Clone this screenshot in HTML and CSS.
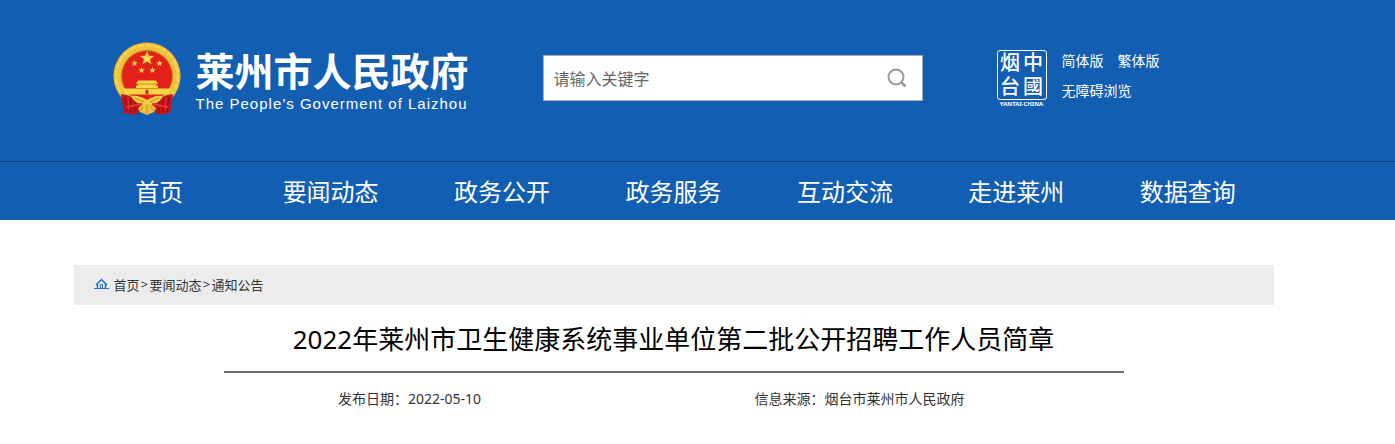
FILE: index.html
```html
<!DOCTYPE html>
<html lang="zh-CN">
<head>
    <meta charset="UTF-8">
    <meta name="viewport" content="width=device-width, initial-scale=1.0">
    <title>2022年莱州市卫生健康系统事业单位第二批公开招聘工作人员简章</title>
    <link rel="stylesheet" href="styles.css">
</head>
<body>
    <header class="header">
        <div class="wrap header-top">
            <a href="#" class="brand">
                <svg class="emblem" viewBox="0 0 68 73" aria-hidden="true">
                    <circle cx="34" cy="34" r="33.5" fill="#e9b936"/>
                    <circle cx="34" cy="34" r="31" fill="none" stroke="#f5d24e" stroke-width="3" stroke-dasharray="7 1"/>
                    <circle cx="34" cy="34" r="28" fill="none" stroke="#f0c743" stroke-width="2" stroke-dasharray="3 1"/>
                    <circle cx="34" cy="34" r="33" fill="none" stroke="#d9a12a" stroke-width="1" stroke-dasharray="3 3"/>
                    <circle cx="34" cy="34" r="25.500" fill="#e3211b" stroke="#c98a1c" stroke-width="1"/>
                    <g fill="#f8d648">
                        <path d="M34 9l2 4.700 5 .3-4 3.300 1.400 4.900-4.400-2.800-4.400 2.800 1.400-4.900-4-3.300 5-.3z"/>
                        <path d="M21.500 18l.9 2.200 2.300.1-1.800 1.500.6 2.200-2-1.200-2 1.200.6-2.200-1.800-1.500 2.300-.1z"/>
                        <path d="M46.500 18l.9 2.200 2.300.1-1.800 1.500.6 2.200-2-1.200-2 1.200.6-2.200-1.800-1.500 2.300-.1z"/>
                        <path d="M28.500 25l.9 2.200 2.300.1-1.800 1.500.6 2.200-2-1.200-2 1.200.6-2.200-1.800-1.500 2.300-.1z"/>
                        <path d="M39.500 25l.9 2.200 2.300.1-1.800 1.500.6 2.200-2-1.200-2 1.200.6-2.200-1.800-1.500 2.300-.1z"/>
                        <path d="M25 38.500h18l2 3.500h-2v1.500h2v3h13l-2 6H12l-2-6h13v-3h2V42h-2z"/>
                    </g>
                    <path d="M24 42h20M23 46.500h22" stroke="#d78b1c" stroke-width="1" fill="none"/>
                    <path d="M32.500 52v-3a1.500 1.500 0 0 1 3 0v3z" fill="#c9281a"/>
                    <path d="M8 52c8 1 14 4 21 8v7c-3 1-4 2-5 6l-3-1-3 1-3-2-4 1z" fill="#c4151a"/>
                    <path d="M60 52c-8 1-14 4-21 8v7c3 1 4 2 5 6l3-1 3 1 3-2 4 1z" fill="#c4151a"/>
                    <path d="M12 55l2 15M17 57l1 13M22 60v11M51 57l-1 13M56 55l-2 15M46 60v11" stroke="#8e1016" stroke-width="1" fill="none"/>
                    <path d="M15 55l1 13M53 55l-1 13" stroke="#e83a2c" stroke-width="1" fill="none"/>
                    <path d="M18 54c6-1 11 1 16 4 5-3 10-5 16-4-2 5-8 9-16 9s-14-4-16-9z" fill="#f3cc44"/>
                    <path d="M25 66l5-4h8l5 4-2 4-7 3-7-3z" fill="#edc040"/>
                    <path d="M34 63v9M30 64l-2 5M38 64l2 5M22 56l9 4M46 56l-9 4" stroke="#c98a1c" fill="none"/>
                    <path d="M29 62c-7 0-10 3-16 3M39 62c7 0 10 3 16 3" stroke="#e83a2c" stroke-width="2" fill="none"/>
                </svg>
                <span class="brand-text">
                    <span class="brand-name">莱州市人民政府</span>
                    <span class="brand-en">The People’s Goverment of Laizhou</span>
                </span>
            </a>

            <form class="search" action="#">
                <input type="text" class="search-input" placeholder="请输入关键字" aria-label="请输入关键字">
                <button type="submit" class="search-btn" aria-label="搜索">
                    <svg viewBox="0 0 20 20" fill="none" stroke="#999" stroke-width="2">
                        <circle cx="9" cy="9" r="7.500"/>
                        <path d="M14 14l4.500 4.500" stroke-width="2.500"/>
                    </svg>
                </button>
            </form>

            <div class="tools">
                <a href="#" class="seal">
                    <span class="seal-box">
                        <span>烟</span><span>中</span>
                        <span>台</span><span>國</span>
                    </span>
                    <span class="seal-en">YANTAI·CHINA</span>
                </a>
                <div class="tool-links">
                    <div class="tool-row">
                        <a href="#">简体版</a>
                        <a href="#">繁体版</a>
                    </div>
                    <div class="tool-row">
                        <a href="#">无障碍浏览</a>
                    </div>
                </div>
            </div>
        </div>

        <nav class="nav">
            <div class="wrap nav-list">
                <a href="#">首页</a>
                <a href="#">要闻动态</a>
                <a href="#">政务公开</a>
                <a href="#">政务服务</a>
                <a href="#">互动交流</a>
                <a href="#">走进莱州</a>
                <a href="#">数据查询</a>
            </div>
        </nav>
    </header>

    <main class="main">
        <div class="wrap">
            <div class="crumbs">
                <svg class="home" viewBox="0 0 15 12" fill="none" stroke="#1a78d0" aria-hidden="true">
                    <path d="M0 10.500h15" stroke-width="1"/>
                    <path d="M2 7l5.500-5.500L13 7M3.500 6v4M11.500 6v4" stroke-width="1.500"/>
                    <path d="M6.500 10V6.500h2V10"/>
                </svg>
                <a href="#">首页</a><span class="sep">&gt;</span><a href="#">要闻动态</a><span class="sep">&gt;</span><a href="#">通知公告</a>
            </div>

            <article class="article">
                <h1>2022年莱州市卫生健康系统事业单位第二批公开招聘工作人员简章</h1>
                <div class="meta">
                    <span>发布日期：2022-05-10</span>
                    <span>信息来源：烟台市莱州市人民政府</span>
                </div>
            </article>
        </div>
    </main>
</body>
</html>
```

FILE: styles.css
```css
* { box-sizing: border-box; }
body { margin: 0; background: #fff; color: #333; font-family: "Noto Sans", "Noto Sans CJK SC", sans-serif; font-size: 14px; }
a { color: inherit; text-decoration: none; }
a:hover { text-decoration: underline; }

.wrap { max-width: 1200px; margin: 0 auto; }

/* header */
.header { background: #115eb2; color: #fff; padding-right: 48px; }
.header-top {
    display: flex;
    align-items: flex-start;
    padding: 42px 0 45px;
}

.brand { display: flex; width: 469px; padding-left: 39px; flex-shrink: 0; }
.brand:hover { text-decoration: none; }
.emblem { width: 68px; height: 73px; margin-right: 15px; flex-shrink: 0; }
.brand-text { display: flex; flex-direction: column; white-space: nowrap; padding-top: 8px; }
.brand-name { font-size: 39px; line-height: 42px; font-weight: bold; }
.brand-en { font-family: "Liberation Sans", Arial, sans-serif; font-size: 15px; line-height: 24px; letter-spacing: 1px; }

/* search box */
.search {
    display: flex;
    align-items: center;
    width: 380px;
    height: 46px;
    margin-top: 13px;
    background: #fff;
    border: 1px solid #a9a9b5;
    flex-shrink: 0;
}
.search-input {
    flex: 1;
    min-width: 0;
    height: 44px;
    padding: 2px 10px 0;
    border: 0;
    outline: none;
    background: none;
    font-family: inherit;
    font-size: 16px;
    color: #333;
}
.search-input::placeholder { color: #666; }
.search-btn { width: 50px; height: 44px; padding: 0; border: 0; background: none; cursor: pointer; }
.search-btn svg { display: block; width: 20px; height: 20px; margin: 0 auto; }

/* seal and language links */
.tools { display: flex; margin-left: 74px; padding-top: 8px; flex-shrink: 0; }
.seal { width: 50px; margin-right: 15px; text-align: center; }
.seal-box {
    display: grid;
    grid-template-columns: 1fr 1fr;
    height: 50px;
    padding: 0 1px;
    border: 1px solid #fff;
    border-radius: 3px;
    font-size: 20px;
    line-height: 24px;
    font-weight: 500;
}
.seal-en { display: block; font-size: 6px; line-height: 8px; font-weight: bold; white-space: nowrap; }
.tool-links { line-height: 30px; margin-top: -4px; }
.tool-row { display: flex; gap: 14px; }

/* nav */
.nav { margin-right: -48px; padding-right: 48px; border-top: 1px solid #0c4587; }
.nav-list { display: grid; grid-template-columns: repeat(7, 1fr); }
.nav-list a { padding-top: 2px; font-size: 24px; line-height: 56px; text-align: center; white-space: nowrap; }

/* content */
.main { padding: 45px 48px 0 0; }
.crumbs {
    display: flex;
    align-items: center;
    height: 40px;
    padding: 0 20px 2px;
    background: #ececec;
    font-size: 13px;
}
.home { width: 15px; height: 12px; margin-right: 5px; }
.sep { width: 10px; text-align: center; }

.article { max-width: 900px; margin: 0 auto; }
.article h1 {
    margin: 0;
    padding-top: 2px;
    border-bottom: 2px solid #6f6f6f;
    color: #000;
    font-size: 26px;
    line-height: 64px;
    font-weight: normal;
    text-align: center;
}
.meta { display: grid; grid-template-columns: 1fr 1fr; line-height: 52px; }
.meta span { padding-right: 78px; text-align: center; }
```
